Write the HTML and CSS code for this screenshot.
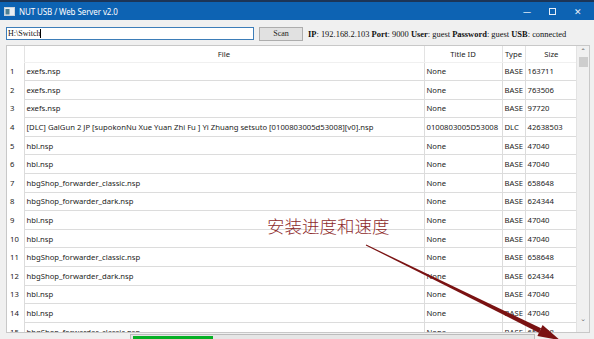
FILE: index.html
```html
<!DOCTYPE html>
<html lang="zh-cn">
  <head>
    <meta charset="UTF-8" />
    <meta name="viewport" content="width=device-width, initial-scale=1.0" />
    <title>NUT USB / Web Server v2.0</title>
    <link rel="stylesheet" href="styles.css">
  </head>
  <body>
    <div class="window">
      <div class="titlebar">
        <svg class="app-icon" width="11" height="9" viewBox="0 0 11 9">
          <rect x="0.5" y="0.5" width="10" height="8" fill="#e8eef3" stroke="#c9d3dc" />
          <rect x="1.5" y="2" width="4" height="5.5" fill="#4d7f94" />
        </svg>
        <span class="title">NUT USB / Web Server v2.0</span>
        <div class="controls">
          <span class="ctl">&#8212;</span>
          <span class="ctl box"></span>
          <span class="ctl close">&#10005;</span>
        </div>
      </div>

      <div class="toolbar">
        <div class="path">H:\Switch<span class="caret"></span></div>
        <div class="scan">Scan</div>
        <div class="info">
          <b>IP</b>: 192.168.2.103 <b>Port</b>: 9000 <b>User</b>: guest <b>Password</b>: guest <b>USB</b>: connected
        </div>
      </div>

      <div class="grid">
        <div class="table-wrap">
          <table class="files">
            <colgroup>
              <col class="c-num" />
              <col class="c-file" />
              <col class="c-id" />
              <col class="c-type" />
              <col class="c-size" />
            </colgroup>
            <thead>
              <tr>
                <th class="num"></th>
                <th>File</th>
                <th>Title ID</th>
                <th>Type</th>
                <th>Size</th>
              </tr>
            </thead>
            <tbody id="rows"></tbody>
          </table>
        </div>
        <div class="scrollbar">
          <span class="arrow">&#710;</span>
          <div class="thumb"></div>
          <div class="track"></div>
          <span class="arrow down">&#711;</span>
        </div>
      </div>

      <div class="status">
        <div class="progress"><div class="fill"></div></div>
      </div>

      <div class="note">安装进度和速度</div>
      <svg class="pointer" width="594" height="339" viewBox="0 0 594 339">
        <polygon points="365.8,245.4 366.2,244.6 541.1,328.3 538.9,332.7" fill="#7a1212" />
        <polygon points="537.4,335.9 542.6,325.1 560,340.2" fill="#7a1212" />
      </svg>
    </div>

    <script>
      var files = [
        ["exefs.nsp", "None", "BASE", "163711"],
        ["exefs.nsp", "None", "BASE", "763506"],
        ["exefs.nsp", "None", "BASE", "97720"],
        ["[DLC] GalGun 2 JP [supokonNu Xue Yuan Zhi Fu ] Yi Zhuang setsuto [0100803005d53008][v0].nsp", "0100803005D53008", "DLC", "42638503"],
        ["hbl.nsp", "None", "BASE", "47040"],
        ["hbl.nsp", "None", "BASE", "47040"],
        ["hbgShop_forwarder_classic.nsp", "None", "BASE", "658648"],
        ["hbgShop_forwarder_dark.nsp", "None", "BASE", "624344"],
        ["hbl.nsp", "None", "BASE", "47040"],
        ["hbl.nsp", "None", "BASE", "47040"],
        ["hbgShop_forwarder_classic.nsp", "None", "BASE", "658648"],
        ["hbgShop_forwarder_dark.nsp", "None", "BASE", "624344"],
        ["hbl.nsp", "None", "BASE", "47040"],
        ["hbl.nsp", "None", "BASE", "47040"],
        ["hbgShop_forwarder_classic.nsp", "None", "BASE", "658648"],
      ];

      var rows = document.getElementById("rows");

      files.forEach(function (f, i) {
        var tr = document.createElement("tr");
        var html = '<td class="num">' + (i + 1) + "</td>";
        f.forEach(function (v) {
          html += "<td>" + v + "</td>";
        });
        tr.innerHTML = html;
        rows.appendChild(tr);
      });
    </script>
  </body>
</html>
```

FILE: styles.css
```css
* {
  box-sizing: border-box;
}

html,
body {
  margin: 0;
  width: 594px;
  height: 339px;
  overflow: hidden;
}

body {
  background-color: #f0f0f0;
  font-family: "Noto Sans", sans-serif;
}

.window {
  position: relative;
  display: flex;
  flex-direction: column;
  height: 339px;
}

.titlebar {
  display: flex;
  flex-shrink: 0;
  align-items: center;
  height: 20px;
  background-color: #0d63b3;
  border-top: 2px solid #1c3557;
  color: #ffffff;
  padding-left: 4px;
}

.app-icon {
  margin-right: 4px;
}

.title {
  font-size: 8px;
  letter-spacing: -0.1px;
}

.controls {
  display: flex;
  align-items: center;
  margin-left: auto;
  margin-right: 6px;
}

.ctl {
  font-size: 8px;
  width: 26px;
  text-align: center;
  color: #e6eef8;
}

.ctl.box {
  width: 7px;
  height: 7px;
  border: 1px solid #e6eef8;
  margin: 0 12px 0 9px;
}

.ctl.close {
  font-size: 9px;
  width: 20px;
}

.toolbar {
  display: flex;
  flex-shrink: 0;
  align-items: flex-start;
  height: 25px;
  padding: 7px 0 0 6px;
}

.path {
  width: 248px;
  height: 13px;
  background-color: #ffffff;
  border: 1px solid #3d7db8;
  font-family: "Liberation Serif", serif;
  font-size: 8px;
  line-height: 11px;
  padding-left: 1px;
  color: #111;
}

.caret {
  display: inline-block;
  width: 1px;
  height: 9px;
  background-color: #000;
  vertical-align: -2px;
}

.scan {
  width: 44px;
  height: 14px;
  margin-left: 5px;
  background-color: #e1e1e1;
  border: 1px solid #adadad;
  font-family: "Liberation Serif", serif;
  font-size: 8px;
  line-height: 12px;
  text-align: center;
  color: #222;
}

.info {
  margin-left: 5px;
  font-family: "Liberation Serif", serif;
  font-size: 8.45px;
  line-height: 14px;
  white-space: nowrap;
  color: #111;
}

.info b {
  font-weight: bold;
}

.grid {
  display: flex;
  flex-shrink: 0;
  margin-left: 6px;
  width: 584px;
  height: 288px;
  border: 1px solid #c8c8c8;
  background-color: #ffffff;
}

.table-wrap {
  width: 570px;
  overflow: hidden;
}

.files {
  table-layout: fixed;
  border-collapse: collapse;
  width: 570px;
  font-size: 7.7px;
  color: #1c1c1c;
}

.c-num {
  width: 17px;
}

.c-file {
  width: 400px;
}

.c-id {
  width: 78px;
}

.c-type {
  width: 23px;
}

.c-size {
  width: 52px;
}

.files th {
  height: 16px;
  font-weight: normal;
  text-align: center;
  padding: 0;
  border-left: 1px solid #e3e3e3;
  border-bottom: 1px solid #f0f0f0;
}

.files td {
  height: 18.6px;
  padding: 0 0 0 2px;
  white-space: nowrap;
  overflow: hidden;
  border-left: 1px solid #dcdcdc;
  border-bottom: 1px solid #dcdcdc;
}

.files th.num,
.files td.num {
  border-left: none;
  border-bottom: none;
  padding-left: 3px;
}

.scrollbar {
  display: flex;
  flex-direction: column;
  align-items: center;
  width: 13px;
  background-color: #f0f0f0;
  border-left: 1px solid #e3e3e3;
}

.arrow {
  height: 11px;
  font-size: 9px;
  line-height: 14px;
  color: #707070;
}

.arrow.down {
  line-height: 6px;
}

.thumb {
  width: 9px;
  height: 10px;
  background-color: #cdcdcd;
}

.track {
  flex: 1;
}

.status {
  flex: 1;
  min-height: 0;
  overflow: hidden;
  padding: 1px 0 0 130px;
}

.progress {
  width: 405px;
  height: 8px;
  background-color: #e6e6e6;
  border: 1px solid #bcbcbc;
  padding: 1px 0 0 2px;
}

.fill {
  width: 80px;
  height: 6px;
  background-color: #06b025;
}

.note {
  position: absolute;
  left: 267px;
  top: 213px;
  font-family: "Noto Sans CJK SC", sans-serif;
  font-weight: 300;
  font-size: 17.5px;
  color: #8e2b2b;
  letter-spacing: 0;
}

.pointer {
  position: absolute;
  left: 0;
  top: 0;
  pointer-events: none;
}
```
